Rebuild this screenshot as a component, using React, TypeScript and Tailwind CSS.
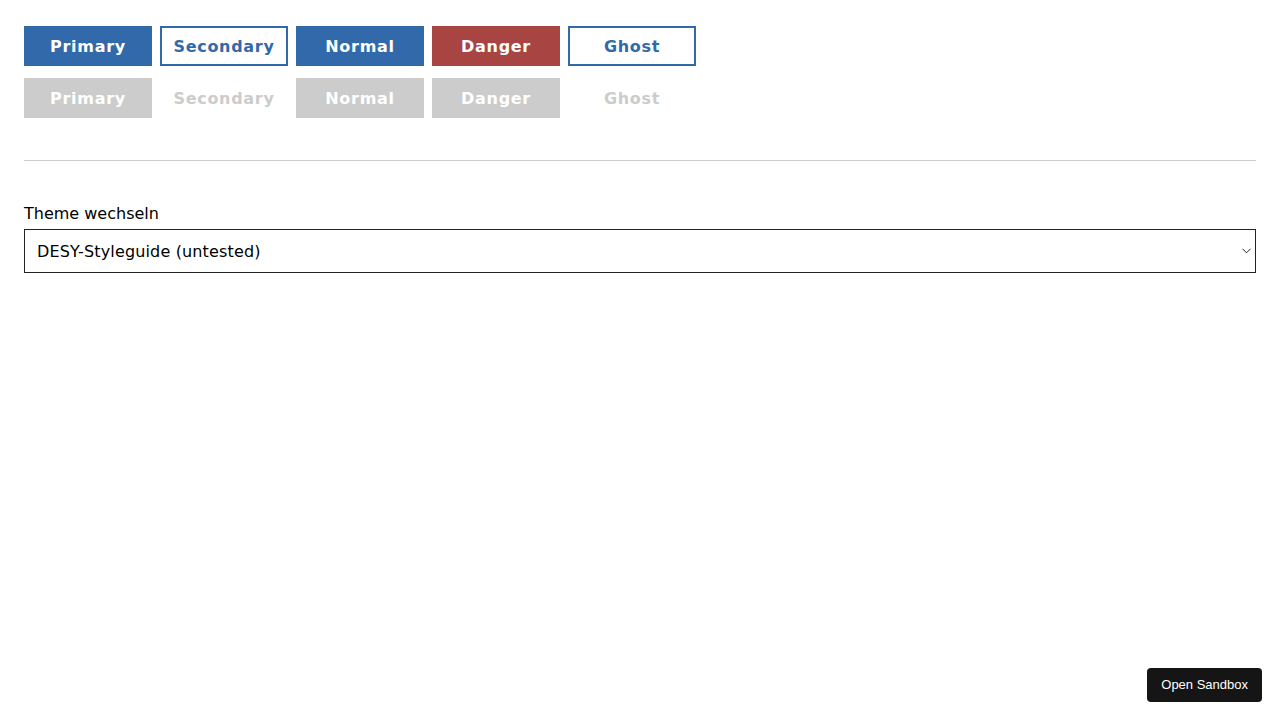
import React from "react";

const base =
  "w-[128px] h-[40px] flex items-center justify-center pt-[2px] text-[16px] font-bold tracking-[0.7px] box-border";

export default function App() {
  return (
    <div className="min-h-[720px] bg-white px-[24px] pt-[26px] relative" style={{ fontFamily: '"DejaVu Sans", Verdana, sans-serif' }}>
      <div className="flex gap-[8px]">
        <button className={`${base} bg-[#3269ab] text-white`}>Primary</button>
        <button className={`${base} bg-white text-[#3269ab] border-2 border-[#3269ab]`}>Secondary</button>
        <button className={`${base} bg-[#3269ab] text-white`}>Normal</button>
        <button className={`${base} bg-[#a84442] text-white`}>Danger</button>
        <button className={`${base} bg-white text-[#3269ab] border-2 border-[#3269ab]`}>Ghost</button>
      </div>
      <div className="flex gap-[8px] mt-[12px]">
        <button className={`${base} bg-[#cccccc] text-white`}>Primary</button>
        <button className={`${base} bg-white text-[#cccccc]`}>Secondary</button>
        <button className={`${base} bg-[#cccccc] text-white`}>Normal</button>
        <button className={`${base} bg-[#cccccc] text-white`}>Danger</button>
        <button className={`${base} bg-white text-[#cccccc]`}>Ghost</button>
      </div>
      <div className="mt-[42px] h-px bg-[#cccccc]" />
      <div className="mt-[43px] text-[16px] text-black leading-[20px]">Theme wechseln</div>
      <div className="mt-[5px] h-[44px] border border-[#222] flex items-center justify-between pl-[12px] pr-[4px] pt-[2px]">
        <span className="text-[16px] text-black tracking-[0.15px]">DESY-Styleguide (untested)</span>
        <svg width="9" height="6" viewBox="0 0 9 6" className="-mt-[2px]">
          <path d="M0.5 0.8 L4.5 4.8 L8.5 0.8" fill="none" stroke="#222" strokeWidth="1" />
        </svg>
      </div>
      <div
        className="absolute right-[18px] top-[668px] h-[34px] px-[14px] rounded-[4px] bg-[#151515] text-white text-[13px] flex items-center"
        style={{ fontFamily: '"Liberation Sans", Arial, sans-serif' }}
      >
        Open Sandbox
      </div>
    </div>
  );
}
